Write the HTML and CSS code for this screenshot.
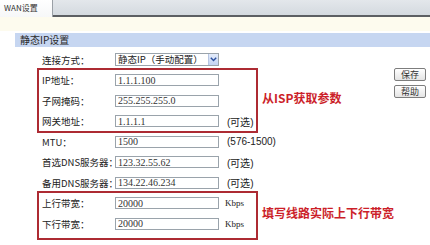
FILE: index.html
```html
<!DOCTYPE html>
<html lang="zh-CN">
<head>
  <meta charset="UTF-8">
  <title>WAN设置</title>
  <link rel="stylesheet" href="styles.css">
</head>
<body>
  <div class="tabbar">
    <div class="tab">WAN设置</div>
    <div class="tab-rest"></div>
  </div>
  <div class="tip"></div>

  <div class="panel">
    <div class="panel-title">静态IP设置</div>
    <div class="panel-body">
      <div class="form">
        <div class="row">
          <span class="label">连接方式：</span>
          <div class="select">
            <span class="select-text">静态IP（手动配置）</span>
            <span class="select-arrow">
              <svg width="7" height="5" viewBox="0 0 7 5"><path d="M0.8 0.8 L3.5 3.6 L6.2 0.8" fill="none" stroke="#2b4f9e" stroke-width="1.4"/></svg>
            </span>
          </div>
        </div>

        <div class="group">
          <div class="box">
            <div class="row">
              <span class="label">IP地址：</span>
              <input class="field" type="text" value="1.1.1.100">
            </div>
            <div class="row">
              <span class="label">子网掩码：</span>
              <input class="field" type="text" value="255.255.255.0">
            </div>
            <div class="row">
              <span class="label">网关地址：</span>
              <input class="field" type="text" value="1.1.1.1">
              <span class="hint">(可选)</span>
            </div>
          </div>
          <div class="note">从ISP获取参数</div>
        </div>

        <div class="row">
          <span class="label">MTU：</span>
          <input class="field" type="text" value="1500">
          <span class="hint">(576-1500)</span>
        </div>
        <div class="row">
          <span class="label">首选DNS服务器：</span>
          <input class="field" type="text" value="123.32.55.62">
          <span class="hint">(可选)</span>
        </div>
        <div class="row">
          <span class="label">备用DNS服务器：</span>
          <input class="field" type="text" value="134.22.46.234">
          <span class="hint">(可选)</span>
        </div>

        <div class="group">
          <div class="box box-last">
            <div class="row">
              <span class="label">上行带宽：</span>
              <input class="field" type="text" value="20000">
              <span class="unit">Kbps</span>
            </div>
            <div class="row">
              <span class="label">下行带宽：</span>
              <input class="field" type="text" value="20000">
              <span class="unit">Kbps</span>
            </div>
          </div>
          <div class="note">填写线路实际上下行带宽</div>
        </div>
      </div>

      <div class="actions">
        <button class="btn">保存</button>
        <button class="btn">帮助</button>
      </div>
    </div>
  </div>
</body>
</html>
```

FILE: styles.css
```css
* {
  margin: 0;
  padding: 0;
  box-sizing: border-box;
}

body {
  font-family: "Noto Sans CJK SC", sans-serif;
  font-size: 10px;
  color: #222;
  background-color: #fff;
  width: 430px;
  height: 245px;
  overflow: hidden;
}

.tabbar {
  display: flex;
  height: 17px;
  background: linear-gradient(#e3e7eb, #d2d8de);
}

.tab {
  width: 53px;
  height: 17px;
  padding: 2px 0 0 4px;
  background: linear-gradient(#ffffff, #f6f7f8);
  border-right: 1px solid #9aa0a6;
  font-size: 8px;
  line-height: 11px;
  color: #333;
}

.tab-rest {
  flex: 1;
  border-bottom: 2px solid #5c5f63;
}

.tip {
  height: 14px;
  background-color: #fdfbee;
}

.panel {
  margin-left: 15px;
  margin-top: 2px;
}

.panel-title {
  height: 14px;
  padding-left: 5px;
  background-color: #c6d6f1;
  line-height: 14px;
  color: #2a2a2a;
}

.panel-body {
  display: flex;
  padding-top: 2.25px;
}

.form {
  padding-left: 24px;
}

.row {
  display: flex;
  align-items: center;
  height: 20.5px;
  padding-left: 3px;
  white-space: nowrap;
}

.label {
  width: 73px;
  flex-shrink: 0;
  font-size: 9.5px;
  overflow: visible;
}

.field {
  flex-shrink: 0;
  width: 104px;
  height: 12px;
  padding: 0 2px;
  border: 1px solid #9aa3ab;
  font-family: "Liberation Serif", serif;
  font-size: 10px;
  color: #333;
  background-color: #fff;
}

.hint {
  margin-left: 8px;
  font-family: "Liberation Sans", sans-serif;
  font-size: 10px;
}

.unit {
  margin-left: 6px;
  font-family: "Liberation Serif", serif;
  font-size: 9px;
}

.select {
  display: flex;
  align-items: center;
  justify-content: space-between;
  flex-shrink: 0;
  width: 104px;
  height: 13px;
  padding-left: 2px;
  border: 1px solid #9aa3ab;
  background-color: #fff;
}

.select-text {
  font-size: 9.5px;
  line-height: 11px;
}

.select-arrow {
  display: flex;
  align-items: center;
  justify-content: center;
  width: 10px;
  height: 11px;
  background: linear-gradient(#e4ecfb, #c3d3f3);
  border-left: 1px solid #b7c6e3;
}

.group {
  display: flex;
  align-items: center;
}

.box {
  width: 217px;
  outline: 2px solid #ad2b33;
}

.box-last {
  padding-bottom: 4px;
}

.note {
  margin-left: 6px;
  margin-top: -6px;
  font-size: 12px;
  font-weight: bold;
  color: #cc1f2a;
  white-space: nowrap;
}

.actions {
  display: flex;
  flex-direction: column;
  gap: 4px;
  margin-left: auto;
  margin-right: 17px;
  padding-top: 18.75px;
}

.btn {
  width: 32px;
  height: 13px;
  border: 1px solid #7d7d7d;
  border-radius: 2px;
  background: linear-gradient(#ffffff, #e4e4e4);
  font-family: "Noto Sans CJK SC", sans-serif;
  font-size: 9px;
  line-height: 11px;
  color: #333;
}
```
